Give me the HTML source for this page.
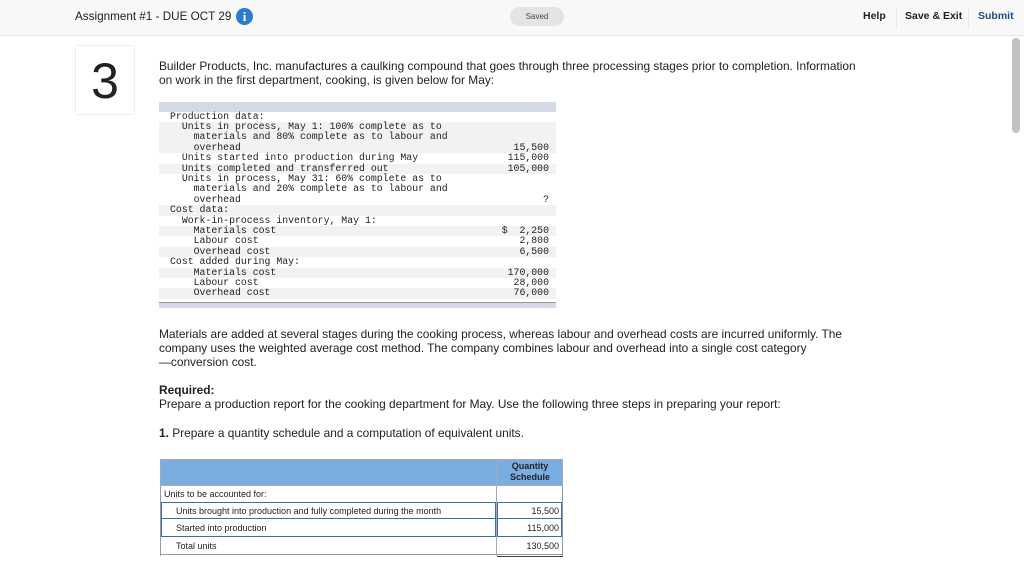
<!DOCTYPE html>
<html><head><meta charset="utf-8"><style>
*{margin:0;padding:0;box-sizing:border-box}
body{width:1024px;height:568px;overflow:hidden;background:#fff;font-family:"Liberation Sans",Arial,sans-serif;color:#222;position:relative}
.hdr{position:absolute;left:0;top:0;width:1024px;height:36px;background:#f8f8f8;border-bottom:1px solid #e6e6e6}
.abs{position:absolute;white-space:nowrap}
.num{position:absolute;left:75px;top:45px;width:60px;height:70px;border:1px solid #eee;border-radius:3px;font-size:50px;text-align:center;line-height:70px;color:#222}
.p{font-size:11.9px;line-height:14px;color:#222}
.mono{font-family:"Liberation Mono","DejaVu Sans Mono",monospace;font-size:9.85px;color:#222}
.r{position:absolute;left:159px;width:397px;height:10.4px}
.g{background:#f2f2f2}
.t{position:absolute;font-size:9px;color:#222}
</style></head><body>
<div class="hdr"></div>
<div class="abs" style="left:75px;top:10px;font-size:11.7px;color:#222">Assignment #1 - DUE OCT 29</div>
<div class="abs" style="left:236px;top:8px;width:17px;height:17px;border-radius:50%;background:#2b7bd0;color:#fff;font-size:13px;font-weight:bold;text-align:center;line-height:17px;font-family:'Liberation Serif',serif">i</div>
<div class="abs" style="left:510px;top:7px;width:54px;height:19px;border-radius:10px;background:#e4e4e6;font-size:8px;text-align:center;line-height:19px;color:#444">Saved</div>
<div class="abs" style="left:863px;top:10px;font-size:10.5px;font-weight:bold;color:#222">Help</div>
<div class="abs" style="left:896px;top:8px;width:1px;height:20px;background:#eaeaea"></div>
<div class="abs" style="left:905px;top:10px;font-size:10.5px;font-weight:bold;color:#222">Save &amp; Exit</div>
<div class="abs" style="left:968px;top:8px;width:1px;height:20px;background:#eaeaea"></div>
<div class="abs" style="left:978px;top:10px;font-size:10.5px;font-weight:bold;color:#1a4c8c">Submit</div>
<div class="abs" style="left:1012px;top:38px;width:8px;height:95px;border-radius:4px;background:#c2c2c2"></div>
<div class="num">3</div>
<div class="abs p" style="left:159px;top:59px">Builder Products, Inc. manufactures a caulking compound that goes through three processing stages prior to completion. Information<br>on work in the first department, cooking, is given below for May:</div>
<div class="abs" style="left:159px;top:102px;width:397px;height:10px;background:#d6dae6"></div>
<div class="r g" style="top:122px;height:31.2px"></div>
<div class="r g" style="top:163.6px"></div>
<div class="r g" style="top:205.2px"></div>
<div class="r g" style="top:226px"></div>
<div class="r g" style="top:246.8px"></div>
<div class="r g" style="top:267.6px"></div>
<div class="r g" style="top:288.4px"></div>
<div class="abs mono" style="left:170px;top:111.5px;line-height:10.4px;white-space:pre">Production data:
  Units in process, May 1: 100% complete as to
    materials and 80% complete as to labour and
    overhead
  Units started into production during May
  Units completed and transferred out
  Units in process, May 31: 60% complete as to
    materials and 20% complete as to labour and
    overhead
Cost data:
  Work-in-process inventory, May 1:
    Materials cost
    Labour cost
    Overhead cost
Cost added during May:
    Materials cost
    Labour cost
    Overhead cost</div>
<div class="abs mono" style="left:470px;width:79px;text-align:right;top:111.5px;line-height:10.4px;white-space:pre">&nbsp;
&nbsp;
&nbsp;
15,500
115,000
105,000
&nbsp;
&nbsp;
?
&nbsp;
&nbsp;
$  2,250
2,800
6,500
&nbsp;
170,000
28,000
76,000</div>
<div class="abs" style="left:159px;top:302px;width:397px;height:6px;background:#d6dae6;border-top:1px solid #999"></div>
<div class="abs p" style="left:159px;top:327px">Materials are added at several stages during the cooking process, whereas labour and overhead costs are incurred uniformly. The<br>company uses the weighted average cost method. The company combines labour and overhead into a single cost category<br>—conversion cost.</div>
<div class="abs p" style="left:159px;top:383px"><b>Required:</b><br>Prepare a production report for the cooking department for May. Use the following three steps in preparing your report:</div>
<div class="abs p" style="left:159px;top:426px"><b>1.</b> Prepare a quantity schedule and a computation of equivalent units.</div>
<div class="abs" style="left:160px;top:459px;width:403px;height:97px;border:1px solid #999;border-top:none;border-bottom:none"></div>
<div class="abs" style="left:160px;top:459px;width:403px;height:27px;background:#7aaee3;border:1px solid #aaa"></div>
<div class="abs" style="left:496px;top:459px;width:1px;height:97px;background:#aaa"></div>
<div class="abs" style="left:497px;top:461px;width:66px;text-align:center;font-size:9px;font-weight:bold;line-height:11px;color:#222">Quantity<br>Schedule</div>
<div class="t" style="left:164px;top:489px">Units to be accounted for:</div>
<div class="abs" style="left:161px;top:502px;width:335px;height:17px;border:1.5px solid #3b6ea8"></div>
<div class="abs" style="left:161px;top:519px;width:335px;height:18px;border:1.5px solid #3b6ea8;border-top:none"></div>
<div class="abs" style="left:497px;top:502px;width:65px;height:17px;border:1.5px solid #3b6ea8"></div>
<div class="abs" style="left:497px;top:519px;width:65px;height:18px;border:1.5px solid #3b6ea8;border-top:none"></div>
<div class="abs" style="left:160px;top:554px;width:403px;height:1px;background:#999"></div>
<div class="abs" style="left:497px;top:556px;width:66px;height:1px;background:#444"></div>
<div class="t" style="left:176px;top:506px">Units brought into production and fully completed during the month</div>
<div class="t" style="left:176px;top:523px">Started into production</div>
<div class="t" style="left:176px;top:541px">Total units</div>
<div class="t" style="left:497px;width:62px;text-align:right;top:506px">15,500</div>
<div class="t" style="left:497px;width:62px;text-align:right;top:523px">115,000</div>
<div class="t" style="left:497px;width:62px;text-align:right;top:541px">130,500</div>
</body></html>
